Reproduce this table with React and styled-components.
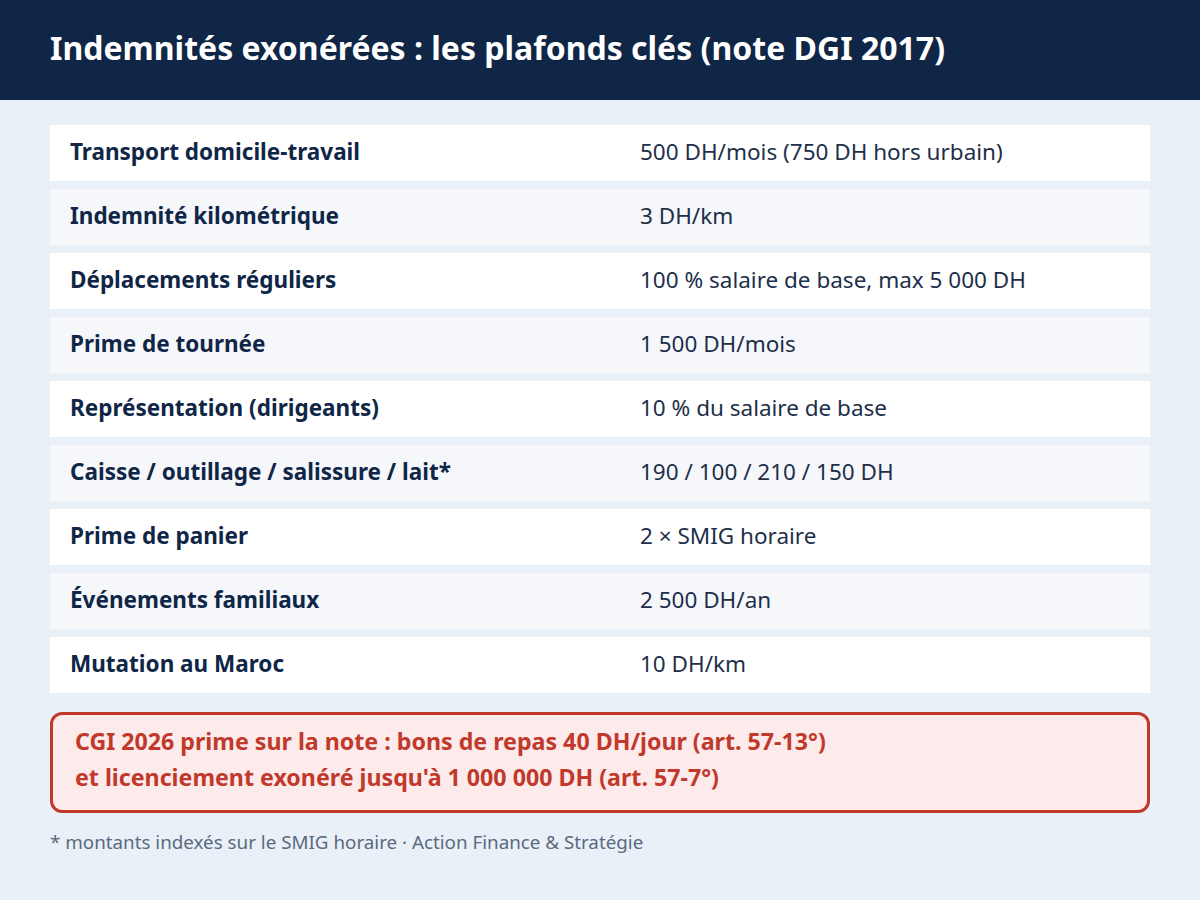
import React from 'react'
import styled, { createGlobalStyle } from 'styled-components'

const GlobalStyle = createGlobalStyle`
  html, body {
    margin: 0;
    padding: 0;
    background: #eaf0f7;
    font-family: "Noto Sans", "Open Sans", sans-serif;
  }
`

const Page = styled.div`
  width: 1200px;
  height: 900px;
  background: #eaf0f7;
  display: flex;
  flex-direction: column;
`

const Header = styled.div`
  height: 100px;
  background: #0f2646;
  display: flex;
  align-items: center;
  padding: 0 50px;
  box-sizing: border-box;
`

const Title = styled.h1`
  margin: 0 0 6px;
  color: #ffffff;
  font-size: 32px;
  font-weight: 700;
`

const Body = styled.div`
  padding: 25px 50px 0;
  display: flex;
  flex-direction: column;
`

const Table = styled.div`
  display: flex;
  flex-direction: column;
  gap: 8px;
`

const Row = styled.div`
  display: grid;
  grid-template-columns: 570px 1fr;
  align-items: center;
  height: 56px;
  padding-left: 20px;
  padding-bottom: 3px;
  box-sizing: border-box;
  background: ${p => (p.$alt ? '#f5f7fb' : '#ffffff')};
`

const Label = styled.div`
  font-size: 22.5px;
  font-weight: 700;
  color: #0f2646;
`

const Value = styled.div`
  font-size: 22.5px;
  color: #1e2f4a;
`

const Callout = styled.div`
  margin-top: 19px;
  border: 3px solid #c0392b;
  border-radius: 12px;
  background: #fdeaea;
  padding: 8px 22px 15px;
  color: #c0392b;
  font-size: 23.2px;
  font-weight: 700;
  line-height: 36px;
`

const Footnote = styled.div`
  margin-top: 16px;
  font-size: 18.8px;
  color: #5a6a80;
`

const rows = [
  ['Transport domicile-travail', '500 DH/mois (750 DH hors urbain)'],
  ['Indemnité kilométrique', '3 DH/km'],
  ['Déplacements réguliers', '100 % salaire de base, max 5 000 DH'],
  ['Prime de tournée', '1 500 DH/mois'],
  ['Représentation (dirigeants)', '10 % du salaire de base'],
  ['Caisse / outillage / salissure / lait*', '190 / 100 / 210 / 150 DH'],
  ['Prime de panier', '2 × SMIG horaire'],
  ['Événements familiaux', '2 500 DH/an'],
  ['Mutation au Maroc', '10 DH/km'],
]

const App = () => {
  return (
    <Page>
      <GlobalStyle />
      <Header>
        <Title>Indemnités exonérées : les plafonds clés (note DGI 2017)</Title>
      </Header>
      <Body>
        <Table>
          {rows.map(([label, value], i) => (
            <Row key={label} $alt={i % 2 === 1}>
              <Label>{label}</Label>
              <Value>{value}</Value>
            </Row>
          ))}
        </Table>
        <Callout>
          <div>CGI 2026 prime sur la note : bons de repas 40 DH/jour (art. 57-13°)</div>
          <div>et licenciement exonéré jusqu'à 1 000 000 DH (art. 57-7°)</div>
        </Callout>
        <Footnote>* montants indexés sur le SMIG horaire · Action Finance &amp; Stratégie</Footnote>
      </Body>
    </Page>
  )
}

export default App
